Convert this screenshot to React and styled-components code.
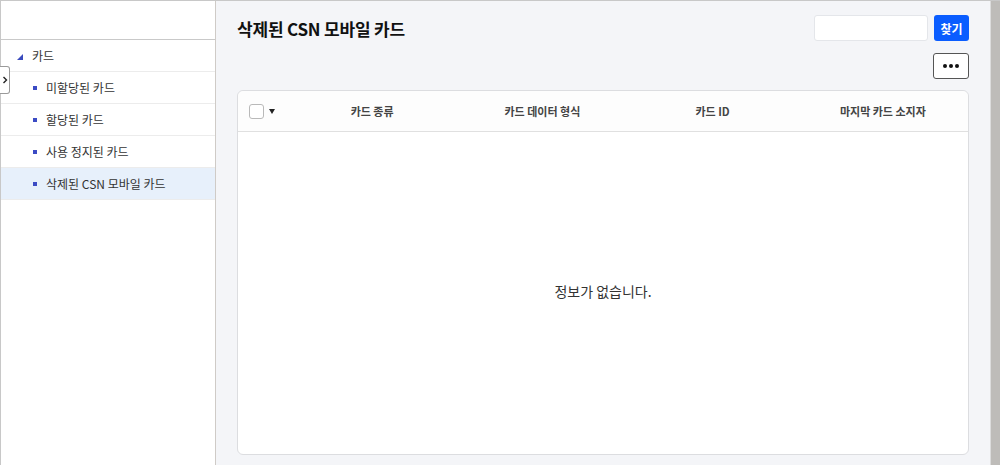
import React from "react";
import styled, { createGlobalStyle } from "styled-components";

const Global = createGlobalStyle`
  html, body { margin: 0; padding: 0; overflow: hidden; }
  body { font-family: "Noto Sans CJK KR", "Noto Sans", sans-serif; color: #333; }
  * { box-sizing: border-box; }
`;

const Frame = styled.div`
  display: flex;
  height: 465px;
  width: 1000px;
  border-top: 1px solid #c8c8c8;
  border-left: 1px solid #c8c8c8;
  position: relative;
`;

const Sidebar = styled.aside`
  width: 215px;
  flex: none;
  background: #fff;
  border-right: 1px solid #cfcbc7;
  display: flex;
  flex-direction: column;
  position: relative;
`;

const SideHeader = styled.div`
  height: 39px;
  border-bottom: 1px solid #c9c9c9;
  flex: none;
`;

const TreeRow = styled.div`
  height: 32px;
  display: flex;
  align-items: center;
  gap: 9px;
  padding-left: ${(p) => (p.$child ? "32px" : "16px")};
  border-bottom: 1px solid #ececec;
  background: ${(p) => (p.$selected ? "#e7f0fb" : "#fff")};
  font-size: 12px;
  color: #333;
  flex: none;
`;

const Triangle = styled.span`
  width: 0;
  height: 0;
  border-left: 6px solid transparent;
  border-bottom: 6px solid #3a4bbd;
  margin-top: 2px;
`;

const Bullet = styled.span`
  width: 4px;
  height: 4px;
  background: #3b4bc4;
`;

const Toggle = styled.div`
  position: absolute;
  left: -1px;
  top: 65px;
  width: 10px;
  height: 28px;
  border: 1px solid #9a9a9a;
  border-left: none;
  border-radius: 0 3px 3px 0;
  background: #fff;
  display: flex;
  align-items: center;
  justify-content: center;
`;

const Main = styled.main`
  flex: 1;
  background: #f4f5f8;
  padding: 14px 21px 10px 21px;
  display: flex;
  flex-direction: column;
  border-right: 1px solid #dcdcdc;
`;

const TopBar = styled.div`
  display: flex;
  align-items: center;
  justify-content: space-between;
  height: 26px;
`;

const Title = styled.h1`
  margin: 0;
  font-size: 17px;
  font-weight: 700;
  color: #111;
  letter-spacing: -0.2px;
`;

const Search = styled.div`
  display: flex;
  gap: 6px;
  align-items: center;
`;

const Input = styled.input`
  width: 114px;
  height: 26px;
  border: 1px solid #e4e6ea;
  border-radius: 3px;
  background: #fff;
  outline: none;
`;

const BlueButton = styled.button`
  width: 35px;
  height: 26px;
  border: none;
  border-radius: 3px;
  background: #0a5dff;
  color: #fff;
  font-family: inherit;
  font-size: 12px;
  font-weight: 700;
  padding: 0;
`;

const ToolRow = styled.div`
  display: flex;
  justify-content: flex-end;
  margin-top: 12px;
`;

const MoreButton = styled.button`
  width: 36px;
  height: 26px;
  border: 1px solid #555;
  border-radius: 3px;
  background: #fff;
  display: flex;
  align-items: center;
  justify-content: center;
  gap: 2px;
  padding: 0;
`;

const Dot = styled.span`
  width: 4px;
  height: 4px;
  border-radius: 50%;
  background: #111;
`;

const Card = styled.section`
  margin-top: 11px;
  flex: 1;
  background: #fff;
  border: 1px solid #dcdde0;
  border-radius: 6px;
  display: flex;
  flex-direction: column;
`;

const HeadRow = styled.div`
  height: 41px;
  display: grid;
  grid-template-columns: 49px repeat(4, 1fr);
  align-items: center;
  border-bottom: 1px solid #e0e0e0;
  background: #fdfdfd;
  border-radius: 6px 6px 0 0;
`;

const CheckCell = styled.div`
  display: flex;
  align-items: center;
  gap: 5px;
  padding-left: 11px;
`;

const Checkbox = styled.span`
  width: 15px;
  height: 15px;
  border: 1px solid #b9b9b9;
  border-radius: 3px;
  background: #fff;
`;

const Caret = styled.span`
  width: 0;
  height: 0;
  border-left: 3.5px solid transparent;
  border-right: 3.5px solid transparent;
  border-top: 5px solid #222;
`;

const HeadCell = styled.div`
  text-align: center;
  font-size: 11px;
  font-weight: 600;
  color: #444;
`;

const Empty = styled.div`
  flex: 1;
  display: flex;
  align-items: center;
  justify-content: center;
  font-size: 14px;
  color: #333;
  padding-bottom: 4px;
`;

const Scroll = styled.div`
  width: 9px;
  flex: none;
  background: #bebcb9;
`;

const children = ["미할당된 카드", "할당된 카드", "사용 정지된 카드", "삭제된 CSN 모바일 카드"];
const columns = ["카드 종류", "카드 데이터 형식", "카드 ID", "마지막 카드 소지자"];

export default function App() {
  return (
    <>
      <Global />
      <Frame>
        <Sidebar>
          <SideHeader />
          <TreeRow>
            <Triangle />
            <span>카드</span>
          </TreeRow>
          {children.map((c, i) => (
            <TreeRow key={c} $child $selected={i === 3}>
              <Bullet />
              <span>{c}</span>
            </TreeRow>
          ))}
          <Toggle>
            <svg width="6" height="8" viewBox="0 0 6 8">
              <path d="M1.5 1 L4.5 4 L1.5 7" fill="none" stroke="#222" strokeWidth="1.4" />
            </svg>
          </Toggle>
        </Sidebar>
        <Main>
          <TopBar>
            <Title>삭제된 CSN 모바일 카드</Title>
            <Search>
              <Input />
              <BlueButton>찾기</BlueButton>
            </Search>
          </TopBar>
          <ToolRow>
            <MoreButton>
              <Dot />
              <Dot />
              <Dot />
            </MoreButton>
          </ToolRow>
          <Card>
            <HeadRow>
              <CheckCell>
                <Checkbox />
                <Caret />
              </CheckCell>
              {columns.map((c) => (
                <HeadCell key={c}>{c}</HeadCell>
              ))}
            </HeadRow>
            <Empty>정보가 없습니다.</Empty>
          </Card>
        </Main>
        <Scroll />
      </Frame>
    </>
  );
}
